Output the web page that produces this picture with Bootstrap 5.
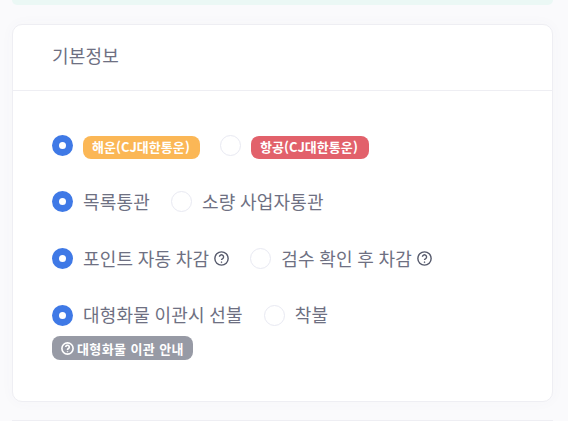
<!DOCTYPE html>
<html lang="ko">
<head>
<meta charset="utf-8">
<title>기본정보</title>
<link href="https://cdn.jsdelivr.net/npm/bootstrap@5.3.0/dist/css/bootstrap.min.css" rel="stylesheet">
<style>
html,body{height:421px;overflow:hidden}
body{background:#fafafc;font-family:"Noto Sans CJK KR","Liberation Sans",sans-serif;color:#6e7082;padding:0 15.5px 0 12px}
.topstrip{height:5px;background:#ebf8f5;border-radius:0 0 8px 8px}
.infocard{margin-top:19px;height:378px;border:1px solid #eeeef3;border-radius:10px;box-shadow:0 0 14px rgba(90,90,140,.03);background:#fff}
.infohead{height:66px;padding:0 39px 5px;background:transparent;border-bottom:1px solid #eeeef3;font-size:18px;color:#6e7082;line-height:1;letter-spacing:.2px}
.infobody{padding:34px 39px 0}
.optrow{height:40px;margin-bottom:16.8px}
.radiodot{width:21px;height:21px;flex:none;border-radius:50%;display:block}
.radiodot.on{background:#3f79e6;position:relative}
.radiodot.on::after{content:"";position:absolute;left:7px;top:7px;width:7px;height:7px;border-radius:50%;background:#fff}
.radiodot.off{background:#fff;border:1px solid #e8e9f2}
.optlabel{font-size:18px;line-height:1;margin:0 0 0 10px;padding-bottom:2px;color:#6e7082;white-space:nowrap;letter-spacing:.2px;word-spacing:-.75px}
.gapafter{margin-right:21px}
.tagpill{height:23px;padding:0 9px;font-size:13px;font-weight:700;color:#fff;border-radius:8px;line-height:22px;white-space:nowrap;margin-left:10px;margin-top:4px;letter-spacing:.05px}
.tagsea{background:#fbb756;width:117px;margin-right:20px}
.tagair{background:#e2616b;width:118px}
.helpicon{width:15px;height:15px;margin-left:5px;flex:none}
.gaphelp{margin-left:21px}
.guidepill{background:#979aa5;color:#fff;font-size:13px;font-weight:700;height:24px;width:141px;margin-top:1px;border-radius:8px;padding:0 9px;gap:3px;white-space:nowrap;letter-spacing:.4px}
.guidepill svg{width:13px;height:13px;flex:none}
.nextcard{height:1px;margin-top:18px;background:#eeeef3}
</style>
</head>
<body>
<div class="topstrip"></div>
<div class="card infocard">
  <div class="card-header infohead d-flex align-items-center">기본정보</div>
  <div class="card-body infobody">
    <div class="optrow d-flex align-items-center">
      <span class="radiodot on"></span><span class="tagpill tagsea">해운(CJ대한통운)</span>
      <span class="radiodot off"></span><span class="tagpill tagair">항공(CJ대한통운)</span>
    </div>
    <div class="optrow d-flex align-items-center">
      <span class="radiodot on"></span><span class="optlabel gapafter">목록통관</span>
      <span class="radiodot off"></span><span class="optlabel">소량 사업자통관</span>
    </div>
    <div class="optrow d-flex align-items-center">
      <span class="radiodot on"></span><span class="optlabel">포인트 자동 차감</span>
      <svg class="helpicon" viewBox="0 0 16 16" fill="none" stroke="#565a6c" stroke-width="1.5"><circle cx="8" cy="8" r="7.1"/><path d="M5.8 6.2a2.2 2.2 0 1 1 3.4 1.9c-.8.4-1.2.9-1.2 1.6"/><circle cx="8" cy="11.9" r=".5" fill="#565a6c" stroke-width=".8"/></svg>
      <span class="radiodot off gaphelp"></span><span class="optlabel">검수 확인 후 차감</span>
      <svg class="helpicon" viewBox="0 0 16 16" fill="none" stroke="#565a6c" stroke-width="1.5"><circle cx="8" cy="8" r="7.1"/><path d="M5.8 6.2a2.2 2.2 0 1 1 3.4 1.9c-.8.4-1.2.9-1.2 1.6"/><circle cx="8" cy="11.9" r=".5" fill="#565a6c" stroke-width=".8"/></svg>
    </div>
    <div class="optrow d-flex align-items-center mb-0">
      <span class="radiodot on"></span><span class="optlabel gapafter">대형화물 이관시 선불</span>
      <span class="radiodot off"></span><span class="optlabel">착불</span>
    </div>
    <div class="guidepill d-flex align-items-center">
      <svg viewBox="0 0 16 16" fill="none" stroke="#fff" stroke-width="2"><circle cx="8" cy="8" r="6.9"/><path d="M5.8 6.2a2.2 2.2 0 1 1 3.4 1.9c-.8.4-1.2.9-1.2 1.6"/><circle cx="8" cy="11.9" r=".5" fill="#fff" stroke-width=".8"/></svg>
      <span>대형화물 이관 안내</span>
    </div>
  </div>
</div>
<div class="nextcard"></div>
<script src="https://cdn.jsdelivr.net/npm/bootstrap@5.3.0/dist/js/bootstrap.bundle.min.js"></script>
</body>
</html>
